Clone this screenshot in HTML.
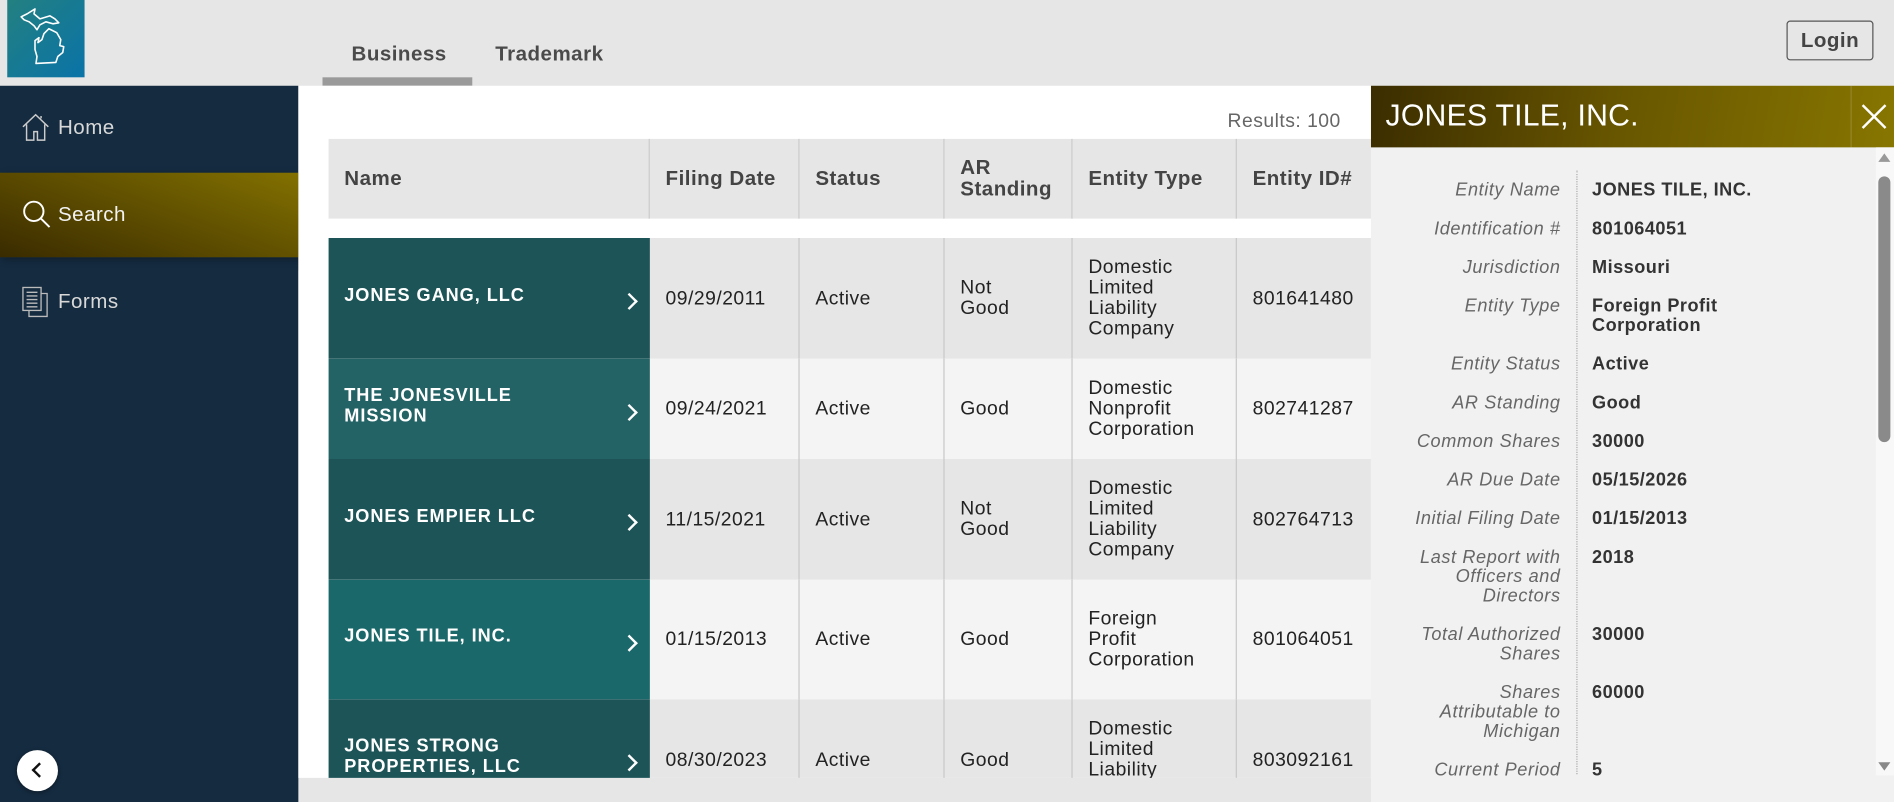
<!DOCTYPE html>
<html><head><meta charset="utf-8"><style>
*{margin:0;padding:0;box-sizing:border-box}
html,body{width:1894px;height:802px;overflow:hidden;background:#e6e6e6}
#w{position:absolute;left:0;top:0;width:1568px;height:664px;overflow:hidden;transform:scale(1.20791);transform-origin:0 0;font-family:"Liberation Sans",sans-serif;background:#e6e6e6;letter-spacing:0.4px}
.a{position:absolute}
.tab{position:absolute;top:35px;font-size:17px;font-weight:bold;color:#4a4a4a}
.side{left:0;top:71px;width:247px;height:593px;background:#152b40}
.nav{position:absolute;left:48px;font-size:17px;color:#d8d8d8}
.main{left:247px;top:71px;width:888px;height:573px;background:#fff}
.th{position:absolute;top:115px;height:66px;background:#e6e6e6;font-weight:bold;font-size:17px;color:#444;display:flex;align-items:center;padding-left:13px;border-right:1px solid #c8c8c8;line-height:18px}
.clip{position:absolute;left:272px;top:197px;width:863px;height:447px;overflow:hidden}
.row{position:absolute;left:0;width:863px;display:flex}
.row>div{border-right:1px solid #c8c8c8;display:flex;align-items:center;padding-left:13px;font-size:16px;color:#222;line-height:17px}
.row>div.n{width:266px;color:#fff;font-weight:bold;font-size:15px;position:relative;border:none;padding-right:70px;padding-bottom:6px;letter-spacing:0.8px}
.n:after{content:"";position:absolute;right:12px;top:50%;width:8px;height:8px;border-right:2.5px solid #fff;border-top:2.5px solid #fff;transform:translate(0,-25%) rotate(45deg)}
.panel{left:1135px;top:71px;width:433px;height:593px;background:#f1f1f1}
.ph{position:absolute;left:0;top:0;width:433px;height:51px;background:linear-gradient(100deg,#3b2d00 0%,#6a5800 50%,#877600 100%)}
.lb{position:absolute;right:276px;text-align:right;font-style:italic;color:#666;font-size:15px;line-height:16px;width:135px;letter-spacing:0.5px}
.vl{position:absolute;left:183px;font-weight:bold;color:#333;font-size:15px;line-height:16px;width:110px}
</style></head><body><div id="w">
<div class="a" style="left:6px;top:0;width:64px;height:64px;background:linear-gradient(135deg,#238080,#0a73a8)">
<svg width="64" height="64" viewBox="0 0 78 78"><path d="M14 17 L20 14 L28 9 L27 14 L33 19 L43 16 L48 19 L52 23 L46 24 L39 22 L33 25 L30 30 L27 26 L22 22 L17 20 Z M37 34 L42 29 L50 33 L54 40 L53 46 L57 47 L56 53 L51 57 L49 63 L29 64 L30 57 L28 50 L28 41 L32 38 L31 43 L35 40 Z" fill="none" stroke="#fff" stroke-width="1.6" stroke-linejoin="round"/></svg></div>
<div class="tab" style="left:291px">Business</div>
<div class="tab" style="left:410px">Trademark</div>
<div class="a" style="left:267px;top:64px;width:124px;height:7px;background:#9a9a9a"></div>
<div class="a" style="left:1479px;top:17px;width:72px;height:33px;border:1px solid #555;border-radius:3px;font-size:17px;font-weight:bold;color:#444;text-align:center;line-height:31px">Login</div>

<div class="a side">
<svg class="a" style="left:18px;top:23px" width="23" height="23" viewBox="0 0 23 23"><path d="M1 11 L11.5 1 L22 11 M4 9 V22 H10 V15 H13 V22 H19 V9 M16 4 V2" fill="none" stroke="#ccc" stroke-width="1.2"/></svg>
<div class="nav" style="top:25px">Home</div>
<div class="nav" style="top:169px">Forms</div>
<svg class="a" style="left:18px;top:166px" width="22" height="26" viewBox="0 0 22 26"><rect x="1" y="1" width="15" height="19" fill="none" stroke="#bbb" stroke-width="1.1"/><path d="M6 20 V25 H21 V6 H16 M4 5h9M4 8h9M4 11h9M4 14h9M4 17h9" fill="none" stroke="#bbb" stroke-width="1.1"/></svg>
<div class="a" style="left:14px;top:550px;width:34px;height:34px;border-radius:50%;background:#fff;box-shadow:0 1px 4px rgba(0,0,0,.4)"><div class="a" style="left:14px;top:12px;width:9px;height:9px;border-left:2.5px solid #111;border-bottom:2.5px solid #111;transform:rotate(45deg)"></div></div>
</div>
<div class="a" style="left:0;top:143px;width:260px;height:70px;background:linear-gradient(20deg,#3a2b00 0%,#5f4f00 50%,#857300 100%);box-shadow:2px 2px 6px rgba(0,0,0,.3)"></div>
<div class="a" style="left:247px;top:213px;width:0;height:0;border-top:11px solid #3a2c00;border-right:13px solid transparent"></div>
<svg class="a" style="left:18px;top:165px" width="24" height="24" viewBox="0 0 24 24"><circle cx="10" cy="10" r="8" fill="none" stroke="#fff" stroke-width="1.6"/><path d="M16 16 L23 23" stroke="#fff" stroke-width="1.6"/></svg>
<div class="nav" style="top:168px;color:#f2f2f2">Search</div>

<div class="a main"></div>
<div class="a" style="left:1000px;top:92px;width:110px;text-align:right;font-size:16px;color:#666">Results: 100</div>
<div class="th" style="left:272px;width:266px">Name</div>
<div class="th" style="left:538px;width:124px">Filing Date</div>
<div class="th" style="left:662px;width:120px">Status</div>
<div class="th" style="left:782px;width:106px">AR<br>Standing</div>
<div class="th" style="left:888px;width:136px">Entity Type</div>
<div class="th" style="left:1024px;width:111px;border:none">Entity ID#</div>

<div class="clip">
<div class="row" style="top:0;height:100px;background:#e6e6e6"><div class="n" style="background:#1d5457">JONES GANG, LLC</div><div style="width:124px">09/29/2011</div><div style="width:120px">Active</div><div style="width:106px">Not<br>Good</div><div style="width:136px">Domestic<br>Limited<br>Liability<br>Company</div><div style="width:111px;border:none">801641480</div></div>
<div class="row" style="top:100px;height:83px;background:#f4f4f4"><div class="n" style="background:#236366">THE JONESVILLE MISSION</div><div style="width:124px">09/24/2021</div><div style="width:120px">Active</div><div style="width:106px">Good</div><div style="width:136px">Domestic<br>Nonprofit<br>Corporation</div><div style="width:111px;border:none">802741287</div></div>
<div class="row" style="top:183px;height:100px;background:#e6e6e6"><div class="n" style="background:#1d5457">JONES EMPIER LLC</div><div style="width:124px">11/15/2021</div><div style="width:120px">Active</div><div style="width:106px">Not<br>Good</div><div style="width:136px">Domestic<br>Limited<br>Liability<br>Company</div><div style="width:111px;border:none">802764713</div></div>
<div class="row" style="top:283px;height:99px;background:#f4f4f4"><div class="n" style="background:#1b686b">JONES TILE, INC.</div><div style="width:124px">01/15/2013</div><div style="width:120px">Active</div><div style="width:106px">Good</div><div style="width:136px">Foreign<br>Profit<br>Corporation</div><div style="width:111px;border:none">801064051</div></div>
<div class="row" style="top:382px;height:100px;background:#e6e6e6"><div class="n" style="background:#1d5457">JONES STRONG PROPERTIES, LLC</div><div style="width:124px">08/30/2023</div><div style="width:120px">Active</div><div style="width:106px">Good</div><div style="width:136px">Domestic<br>Limited<br>Liability<br>Company</div><div style="width:111px;border:none">803092161</div></div>
</div>

<div class="a panel">
<div class="ph"><div class="a" style="left:12px;top:11px;font-size:25px;color:#fff;letter-spacing:0.2px">JONES TILE, INC.</div>
<div class="a" style="left:397px;top:0;width:1px;height:51px;background:rgba(255,255,255,.15)"></div>
<svg class="a" style="left:406px;top:15px" width="21" height="21" viewBox="0 0 21 21"><path d="M1 1 L20 20 M20 1 L1 20" stroke="#fff" stroke-width="2"/></svg></div>
<div class="a" style="left:170px;top:70px;width:0;height:500px;border-left:1px dotted #aaa"></div>
<div class="a" style="left:418px;top:51px;width:15px;height:520px;background:#f8f8f8"></div>
<div class="a" style="left:420px;top:56px;border:5px solid transparent;border-bottom:7px solid #999;border-top:0"></div>
<div class="a" style="left:420px;top:75px;width:10px;height:220px;border-radius:5px;background:#8a8a8a"></div>
<div class="a" style="left:420px;top:560px;border:5px solid transparent;border-top:7px solid #888;border-bottom:0"></div>
<div class="lb" style="top:79px">Entity Name</div><div class="vl" style="top:79px;width:160px">JONES TILE, INC.</div>
<div class="lb" style="top:111px">Identification #</div><div class="vl" style="top:111px">801064051</div>
<div class="lb" style="top:143px">Jurisdiction</div><div class="vl" style="top:143px">Missouri</div>
<div class="lb" style="top:175px">Entity Type</div><div class="vl" style="top:175px">Foreign Profit Corporation</div>
<div class="lb" style="top:223px">Entity Status</div><div class="vl" style="top:223px">Active</div>
<div class="lb" style="top:255px">AR Standing</div><div class="vl" style="top:255px">Good</div>
<div class="lb" style="top:287px">Common Shares</div><div class="vl" style="top:287px">30000</div>
<div class="lb" style="top:319px">AR Due Date</div><div class="vl" style="top:319px">05/15/2026</div>
<div class="lb" style="top:351px">Initial Filing Date</div><div class="vl" style="top:351px">01/15/2013</div>
<div class="lb" style="top:383px">Last Report with<br>Officers and<br>Directors</div><div class="vl" style="top:383px">2018</div>
<div class="lb" style="top:447px">Total Authorized<br>Shares</div><div class="vl" style="top:447px">30000</div>
<div class="lb" style="top:495px">Shares<br>Attributable to<br>Michigan</div><div class="vl" style="top:495px">60000</div>
<div class="lb" style="top:559px">Current Period</div><div class="vl" style="top:559px">5</div>
</div>
</div></body></html>
